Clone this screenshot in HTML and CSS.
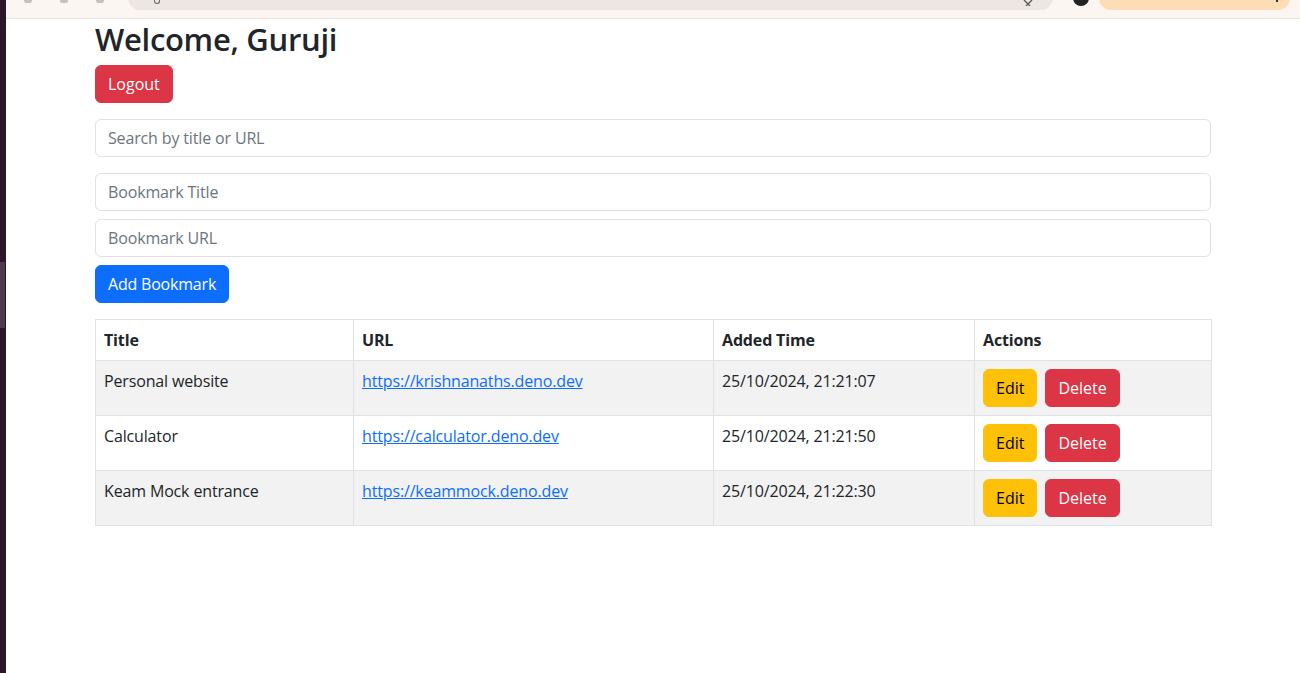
FILE: index.html
```html
<!DOCTYPE html>
<html lang="en">
<head>
<meta charset="utf-8">
<title>Bookmarks</title>
<link rel="stylesheet" href="styles.css">
</head>
<body>
<div class="desk">
  <div class="dock"><div class="dock-mark"></div></div>
  <div class="window">
    <div class="chrome">
      <div class="nav-icons"><span></span><span></span><span></span></div>
      <div class="urlbar">
        <span class="url-glyph"></span>
        <svg class="url-x" width="10" height="6" viewBox="0 0 10 6"><path d="M1 0 L5 4 L9 0 M5 4 L3 6 M5 4 L7 6" stroke="#555" stroke-width="1.3" fill="none"/></svg>
      </div>
      <div class="avatar"></div>
      <div class="pill"><span class="pill-dot"></span></div>
    </div>
    <main class="page">
      <div class="container">
        <h2 class="title">Welcome, Guruji</h2>
        <button class="btn btn-danger btn-logout">Logout</button>
        <input class="field field-search" type="text" placeholder="Search by title or URL">
        <input class="field field-tight" type="text" placeholder="Bookmark Title">
        <input class="field field-tight" type="text" placeholder="Bookmark URL">
        <button class="btn btn-primary btn-add">Add Bookmark</button>
        <table class="table">
          <colgroup>
            <col class="c1"><col class="c2"><col class="c3"><col class="c4">
          </colgroup>
          <thead>
            <tr><th>Title</th><th>URL</th><th>Added Time</th><th>Actions</th></tr>
          </thead>
          <tbody>
            <tr class="odd">
              <td>Personal website</td>
              <td><a href="#">https://krishnanaths.deno.dev</a></td>
              <td>25/10/2024, 21:21:07</td>
              <td><div class="actions"><button class="btn btn-warning">Edit</button><button class="btn btn-danger">Delete</button></div></td>
            </tr>
            <tr>
              <td>Calculator</td>
              <td><a href="#">https://calculator.deno.dev</a></td>
              <td>25/10/2024, 21:21:50</td>
              <td><div class="actions"><button class="btn btn-warning">Edit</button><button class="btn btn-danger">Delete</button></div></td>
            </tr>
            <tr class="odd">
              <td>Keam Mock entrance</td>
              <td><a href="#">https://keammock.deno.dev</a></td>
              <td>25/10/2024, 21:22:30</td>
              <td><div class="actions"><button class="btn btn-warning">Edit</button><button class="btn btn-danger">Delete</button></div></td>
            </tr>
          </tbody>
        </table>
      </div>
    </main>
  </div>
</div>
</body>
</html>
```
FILE: styles.css
```css
* { box-sizing: border-box; }
html, body { margin: 0; padding: 0; height: 100%; }
body {
  font-family: "Open Sans", "Noto Sans", sans-serif;
  color: #212529;
  background: #fff;
  overflow: hidden;
  letter-spacing: -0.15px;
}
.desk { display: flex; height: 673px; }
.dock {
  width: 6px;
  background: #2a1828;
  flex: none;
  padding-top: 262px;
}
.dock-mark { width: 5px; height: 66px; background: #4e3a4c; }
.window { flex: 1; display: flex; flex-direction: column; min-width: 0; }
.chrome {
  height: 19px;
  background: #fcf6f2;
  border-bottom: 1px solid #ece4de;
  display: flex;
  align-items: flex-start;
  flex: none;
}
.nav-icons { width: 122px; display: flex; gap: 28px; padding: 0 0 0 18px; }
.nav-icons span { width: 8px; height: 3px; background: #c9c1bc; border-radius: 0 0 2px 2px; }
.urlbar {
  width: 925px;
  height: 12px;
  margin-top: -2px;
  background: #ede6e2;
  border-radius: 0 0 14px 14px;
  display: flex;
  justify-content: space-between;
  align-items: flex-start;
  padding: 2px 20px 0 26px;
}
.url-glyph { width: 6px; height: 4px; border: 1.5px solid #666; border-top: none; border-radius: 0 0 3px 3px; }
.url-x { display: block; }
.avatar {
  width: 16px; height: 10px; margin: -4px 0 0 20px;
  background: #222; border-radius: 0 0 8px 8px;
}
.pill {
  width: 191px; height: 12px; margin: -2px 0 0 10px;
  background: #fddcb6; border-radius: 0 0 14px 14px;
  display: flex; justify-content: flex-end; padding-right: 12px;
}
.pill-dot { width: 2px; height: 4px; background: #333; }

.page { flex: 1; padding-top: 1px; }
.container {
  width: 1116px;
  margin-left: 89px;
  display: flex;
  flex-direction: column;
  align-items: flex-start;
}
.title {
  margin: 0 0 7px;
  font-size: 31px;
  font-weight: 600;
  line-height: 38px;
  letter-spacing: -0.3px;
}
.btn {
  font-family: inherit;
  font-size: 16px;
  line-height: 24px;
  letter-spacing: 0;
  padding: 6px 12px;
  border: 1px solid transparent;
  border-radius: 6px;
  cursor: pointer;
}
.btn-danger { background: #dc3545; border-color: #dc3545; color: #fff; }
.btn-primary { background: #0d6efd; border-color: #0d6efd; color: #fff; }
.btn-warning { background: #ffc107; border-color: #ffc107; color: #000; }
.btn-logout { margin-bottom: 16px; }
.btn-add { margin-bottom: 16px; letter-spacing: -0.2px; }
.field {
  width: 100%;
  height: 38px;
  font-family: inherit;
  font-size: 16px;
  letter-spacing: -0.15px;
  padding: 6px 12px;
  border: 1px solid #dee2e6;
  border-radius: 6px;
  color: #212529;
  background: #fff;
}
.field::placeholder { color: #6c757d; }
.field-search { margin-bottom: 16px; }
.field-tight { margin-bottom: 8px; }
.table {
  width: 100%;
  border-collapse: collapse;
  table-layout: fixed;
  border: 1px solid #dee2e6;
}
.c1 { width: 258px; }
.c2 { width: 360px; }
.c3 { width: 261px; }
.c4 { width: 237px; }
.table th, .table td {
  border: 1px solid #dee2e6;
  padding: 8px;
  font-size: 16px;
  line-height: 24px;
  text-align: left;
  vertical-align: top;
}
.table th { font-weight: 700; }
.table tr.odd td { background: #f2f2f2; }
.table a { color: #0d6efd; text-decoration: underline; }
.actions { display: flex; gap: 8px; }
```
